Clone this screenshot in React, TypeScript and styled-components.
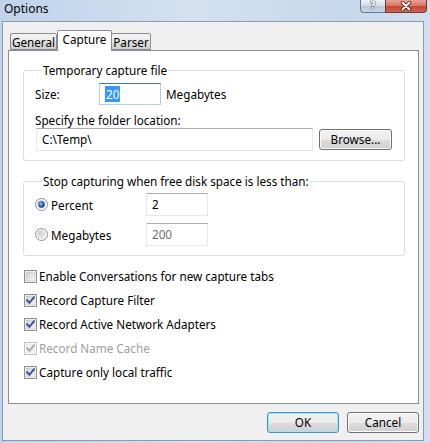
import React from 'react';
import styled, { createGlobalStyle } from 'styled-components';

const GlobalStyle = createGlobalStyle`
  html, body {
    margin: 0;
    padding: 0;
  }
  body {
    width: 430px;
    height: 443px;
    overflow: hidden;
    font-family: "Segoe UI", "Noto Sans", "Open Sans", sans-serif;
    font-size: 11.7px;
    color: #000;
  }
`;

/*
 * Drawings
 */

const CheckBox: React.FC<{ checked?: boolean; disabled?: boolean }> = ({ checked, disabled }) => (
  <svg width="13" height="13" viewBox="0 0 13 13">
    <defs>
      <linearGradient id="cbFill" x1="0" y1="0" x2="1" y2="1">
        <stop offset="0" stopColor="#cbcfd5" />
        <stop offset="1" stopColor="#f7f7f7" />
      </linearGradient>
    </defs>
    <rect x="0.5" y="0.5" width="12" height="12" fill="#fff" stroke={disabled ? '#c4c4c4' : '#8e8f8f'} />
    <rect x="2" y="2" width="9" height="9" fill={disabled ? '#f0f0f0' : 'url(#cbFill)'} stroke={disabled ? '#e0e0e0' : '#b8bcc3'} strokeWidth="0.6" />
    {checked && (
      <path
        d="M3.2 6.4 L5.4 8.8 L9.9 3.3"
        fill="none"
        stroke={disabled ? '#a8a8a8' : '#3a4f8f'}
        strokeWidth="1.9"
        strokeLinecap="square"
      />
    )}
  </svg>
);

const RadioDot: React.FC<{ checked?: boolean }> = ({ checked }) => (
  <svg width="13" height="13" viewBox="0 0 13 13">
    <defs>
      <linearGradient id="rdFill" x1="0" y1="0" x2="1" y2="1">
        <stop offset="0" stopColor="#c3c7cd" />
        <stop offset="1" stopColor="#f6f6f6" />
      </linearGradient>
      <radialGradient id="rdDot" cx="0.4" cy="0.4" r="0.6">
        <stop offset="0" stopColor="#a8e0ff" />
        <stop offset="0.5" stopColor="#2a6fc8" />
        <stop offset="1" stopColor="#123c7a" />
      </radialGradient>
    </defs>
    <circle cx="6.5" cy="6.5" r="6" fill="#fff" stroke="#8e8f8f" />
    <circle cx="6.5" cy="6.5" r="4.5" fill="url(#rdFill)" />
    {checked && <circle cx="6.5" cy="6.5" r="3.2" fill="url(#rdDot)" />}
  </svg>
);

const CloseGlyph: React.FC = () => (
  <svg width="14" height="10" viewBox="0 0 14 10">
    <path d="M3.5 1.5 L10.5 8.5 M10.5 1.5 L3.5 8.5" stroke="#5a1a14" strokeWidth="3.4" strokeLinecap="round" />
    <path d="M3.5 1.5 L10.5 8.5 M10.5 1.5 L3.5 8.5" stroke="#fff" strokeWidth="1.8" strokeLinecap="round" />
  </svg>
);

/*
 * Component
 */

type CheckItem = { label: string; checked: boolean; disabled?: boolean };

const checkItems: CheckItem[] = [
  { label: 'Enable Conversations for new capture tabs', checked: false },
  { label: 'Record Capture Filter', checked: true },
  { label: 'Record Active Network Adapters', checked: true },
  { label: 'Record Name Cache', checked: true, disabled: true },
  { label: 'Capture only local traffic', checked: true },
];

export default function App() {
  return (
    <>
      <GlobalStyle />
      <Window>
        <TitleBar>
          <Title>Options</Title>
          <CaptionButtons>
            <HelpButton>?</HelpButton>
            <CloseButton>
              <CloseGlyph />
            </CloseButton>
          </CaptionButtons>
        </TitleBar>

        <Client>
          <TabStrip>
            <Tab width={47}>General</Tab>
            <Tab width={55} selected>Capture</Tab>
            <Tab width={40}>Parser</Tab>
          </TabStrip>

          <TabPanel>
            <GroupBox>
              <Legend>Temporary capture file</Legend>
              <SizeRow>
                <FieldLabel>Size:</FieldLabel>
                <TextBox width={62} focused>
                  <Selected>20</Selected>
                </TextBox>
                <span>Megabytes</span>
              </SizeRow>
              <FolderLabel>Specify the folder location:</FolderLabel>
              <FolderRow>
                <TextBox width={277} tall>C:\Temp\</TextBox>
                <Button width={73}>Browse...</Button>
              </FolderRow>
            </GroupBox>

            <GroupBox spaced>
              <Legend>Stop capturing when free disk space is less than:</Legend>
              <RadioRow>
                <RadioLabel>
                  <RadioDot checked />
                  Percent
                </RadioLabel>
                <TextBox width={62} tall>2</TextBox>
              </RadioRow>
              <RadioRow>
                <RadioLabel>
                  <RadioDot />
                  Megabytes
                </RadioLabel>
                <TextBox width={62} tall disabled>200</TextBox>
              </RadioRow>
            </GroupBox>

            <CheckList>
              {checkItems.map((item) => (
                <CheckRow key={item.label} disabled={item.disabled}>
                  <CheckBox checked={item.checked} disabled={item.disabled} />
                  {item.label}
                </CheckRow>
              ))}
            </CheckList>
          </TabPanel>

          <ButtonRow>
            <Button width={72} isDefault>OK</Button>
            <Button width={72}>Cancel</Button>
          </ButtonRow>
        </Client>
      </Window>
    </>
  );
}

const Window = styled.div`
  width: 430px;
  height: 443px;
  display: flex;
  flex-direction: column;
  box-sizing: border-box;
  background: linear-gradient(to right, #bfd3ea 0%, #d3e1f1 45%, #c6d8ec 80%, #d0dff0 100%);
`;

const TitleBar = styled.div`
  height: 21px;
  display: flex;
  justify-content: space-between;
  align-items: flex-start;
  padding-left: 4px;
  flex-shrink: 0;
`;

const Title = styled.div`
  font-size: 12px;
  line-height: 18px;
  color: #000;
`;

const CaptionButtons = styled.div`
  display: flex;
  margin-right: 3px;
`;

const HelpButton = styled.div`
  width: 25px;
  height: 13px;
  box-sizing: border-box;
  border: 1px solid #6b7a90;
  border-top: none;
  border-right: none;
  border-bottom-left-radius: 4px;
  background: linear-gradient(#eef2f7 0%, #d3dce7 50%, #b9c7d8 51%, #c9d6e6 100%);
  display: flex;
  justify-content: center;
  align-items: center;
  font-family: "DejaVu Sans", sans-serif;
  color: #fff;
  font-weight: bold;
  font-size: 10px;
  line-height: 1;
  overflow: hidden;
  text-shadow: 0 0 1px #33445c, 0 0 1px #33445c, 0 0 1px #33445c;
`;

const CloseButton = styled.div`
  width: 42px;
  height: 13px;
  box-sizing: border-box;
  border: 1px solid #6b3a34;
  border-top: none;
  border-bottom-right-radius: 4px;
  background: linear-gradient(#e8a597 0%, #d9725f 50%, #c44532 51%, #d3644e 100%);
  display: flex;
  justify-content: center;
  align-items: center;
`;

const Client = styled.div`
  flex: 1;
  margin: 0 6px 2px 2px;
  border: 1px solid #8a9bb0;
  background: #f0f0f0;
  display: flex;
  flex-direction: column;
  padding: 8px 4px 0 5px;
`;

const TabStrip = styled.div`
  display: flex;
  align-items: flex-end;
  height: 20px;
  padding-left: 2px;
  position: relative;
  z-index: 1;
`;

const Tab = styled.div<{ width: number; selected?: boolean }>`
  width: ${(p) => p.width}px;
  height: ${(p) => (p.selected ? 21 : 17)}px;
  margin-bottom: ${(p) => (p.selected ? -1 : 0)}px;
  box-sizing: border-box;
  border: 1px solid #898c95;
  border-bottom: ${(p) => (p.selected ? 'none' : '1px solid #898c95')};
  margin-left: ${(p) => (p.selected ? 0 : -1)}px;
  border-radius: 2px 2px 0 0;
  background: ${(p) => (p.selected ? '#fff' : 'linear-gradient(#f2f2f2 0%, #ebebeb 50%, #dddddd 51%, #cfcfcf 100%)')};
  text-align: center;
  line-height: ${(p) => (p.selected ? 17 : 16)}px;
  &:first-child {
    margin-left: 0;
  }
`;

const TabPanel = styled.div`
  height: 354px;
  box-sizing: border-box;
  border: 1px solid #898c95;
  background: #fff;
  padding: 0 13px 0 14px;
  display: flex;
  flex-direction: column;
`;

const GroupBox = styled.fieldset<{ spaced?: boolean }>`
  margin: ${(p) => (p.spaced ? 12 : 11)}px 0 0 0;
  padding: ${(p) => (p.spaced ? 4 : 5)}px 11px 9px 11px;
  border: 1px solid #d5dfe5;
  border-radius: 3px;
  min-width: 0;
  display: flex;
  flex-direction: column;
`;

const Legend = styled.legend`
  padding: 0 1px;
  margin-left: 7px;
  line-height: 16px;
`;

const SizeRow = styled.div`
  display: flex;
  align-items: center;
  gap: 5px;
`;

const FieldLabel = styled.span`
  width: 59px;
`;

const TextBox = styled.div<{ width: number; focused?: boolean; tall?: boolean; disabled?: boolean }>`
  width: ${(p) => p.width}px;
  height: ${(p) => (p.tall ? 23 : 22)}px;
  box-sizing: border-box;
  border: 1px solid ${(p) => (p.focused ? '#b5cfe7' : '#e3e9ef')};
  border-top-color: ${(p) => (p.focused ? '#3d7bad' : '#abadb3')};
  background: #fff;
  color: ${(p) => (p.disabled ? '#6d6d6d' : '#000')};
  padding: 2px 0 0 5px;
  line-height: 16px;
  white-space: nowrap;
`;

const Selected = styled.span`
  background: #3399ff;
  color: #fff;
  padding: 0 1px;
`;

const FolderLabel = styled.div`
  margin-top: 7px;
  line-height: 16px;
`;

const FolderRow = styled.div`
  display: flex;
  align-items: center;
  gap: 6px;
  margin-left: 1px;
`;

const Button = styled.div<{ width: number; isDefault?: boolean }>`
  width: ${(p) => p.width}px;
  height: 21px;
  box-sizing: border-box;
  border: 1px solid ${(p) => (p.isDefault ? '#3c94c4' : '#707070')};
  border-radius: 3px;
  background: linear-gradient(#f2f2f2 0%, #ebebeb 50%, #dddddd 51%, #cfcfcf 100%);
  box-shadow: inset 0 0 0 1px ${(p) => (p.isDefault ? '#a6e3f7' : '#fbfbfb')};
  text-align: center;
  line-height: 19px;
`;

const RadioRow = styled.div`
  display: flex;
  align-items: center;
  & + & {
    margin-top: 7px;
  }
`;

const RadioLabel = styled.label`
  width: 111px;
  display: flex;
  align-items: center;
  gap: 3px;
`;

const CheckList = styled.div`
  display: flex;
  flex-direction: column;
  margin-top: 8px;
  padding-left: 1px;
`;

const CheckRow = styled.label<{ disabled?: boolean }>`
  height: 24px;
  display: flex;
  align-items: center;
  gap: 2px;
  color: ${(p) => (p.disabled ? '#a0a0a0' : '#000')};
`;

const ButtonRow = styled.div`
  display: flex;
  justify-content: flex-end;
  gap: 8px;
  margin-top: 8px;
`;
